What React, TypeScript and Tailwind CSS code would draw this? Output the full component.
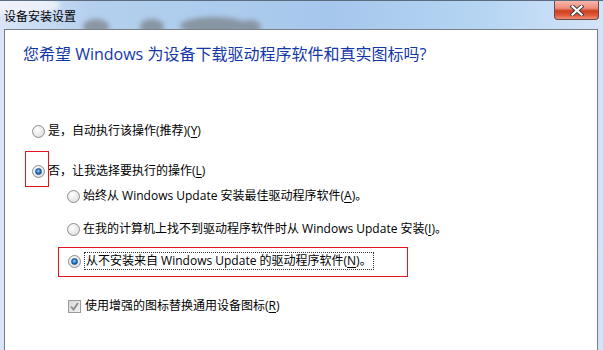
import React from 'react';

const bodyFont = { fontFamily: '"Open Sans", "Noto Sans CJK SC", sans-serif' };

const Radio: React.FC<{ checked?: boolean }> = ({ checked }) => (
  <span className="relative flex h-[13px] w-[13px] shrink-0 items-center justify-center rounded-full border border-[#8c8f94] bg-[radial-gradient(circle_at_40%_35%,#ffffff,#d6d6d6)]">
    {checked && (
      <span className="h-[7px] w-[7px] rounded-full border border-[#1d4f8a] bg-[radial-gradient(circle_at_45%_40%,#9fd3ff_0%,#2a7fd0_45%,#0d3d7a_100%)]" />
    )}
  </span>
);

const Checkbox: React.FC = () => (
  <span className="flex h-[13px] w-[13px] shrink-0 items-center justify-center border border-[#9a9a9a] bg-[linear-gradient(135deg,#d8d8d8,#f2f2f2)]">
    <svg width="9" height="9" viewBox="0 0 9 9">
      <path d="M1 4.5 L3.5 7.5 L8 1" fill="none" stroke="#8a8a8a" strokeWidth="1.8" />
    </svg>
  </span>
);

const Key: React.FC<{ k: string }> = ({ k }) => (
  <>
    (<span className="underline underline-offset-2">{k}</span>)
  </>
);

const CloseButton: React.FC = () => (
  <div className="flex h-[19px] w-[45px] items-center justify-center rounded-b-[4px] border border-t-0 border-[#6e4a46] bg-[linear-gradient(180deg,#f7b7aa_0%,#ee8d7d_40%,#c9401f_55%,#e35a3c_80%,#ee8f7a_100%)]">
    <svg width="14" height="11" viewBox="0 0 14 11">
      <path d="M2.5 1.5 L11.5 9.5 M11.5 1.5 L2.5 9.5" stroke="#3b3b3b" strokeWidth="4" strokeLinecap="square" />
      <path d="M2.5 1.5 L11.5 9.5 M11.5 1.5 L2.5 9.5" stroke="#ffffff" strokeWidth="2.2" strokeLinecap="square" />
    </svg>
  </div>
);

export default function App() {
  return (
    <div
      className="relative flex h-[350px] w-[603px] flex-col overflow-hidden border-t border-[#5c6c80] bg-[linear-gradient(90deg,#d9e5f6_0%,#b4d0ee_15%,#a6c7ec_55%,#b5d5f3_80%,#d4e3f8_100%)]"
      style={bodyFont}
    >
      <div className="relative flex h-[28px] shrink-0 items-start justify-between pl-[4px] pr-[4px]">
        {/* soft grey shapes seen through the glass title bar */}
        <svg className="pointer-events-none absolute left-0 top-0" width="320" height="28" viewBox="0 0 320 28">
          <defs>
            <filter id="soft" x="-50%" y="-50%" width="200%" height="200%">
              <feGaussianBlur stdDeviation="2.5" />
            </filter>
          </defs>
          <g fill="#7c838a" opacity="0.75" filter="url(#soft)">
            <ellipse cx="96" cy="26" rx="13" ry="8" />
            <ellipse cx="152" cy="26" rx="12" ry="8" />
            <ellipse cx="214" cy="25" rx="34" ry="9" />
            <ellipse cx="250" cy="26" rx="11" ry="7" />
          </g>
          <ellipse cx="20" cy="4" rx="40" ry="10" fill="#f4f6fb" opacity="0.8" filter="url(#soft)" />
        </svg>
        <span className="relative mt-[7px] text-[12px] leading-[16px] text-black" style={{ fontFamily: '"Noto Sans CJK SC", sans-serif' }}>
          设备安装设置
        </span>
        <CloseButton />
      </div>

      <div className="relative ml-[4px] mr-[5px] flex-1 border border-b-0 border-[#7b7f85] bg-white">
        <div className="ml-[18px] mt-[13px] text-[16px] leading-[22px] text-[#1437a8]">
          您希望 Windows 为设备下载驱动程序软件和真实图标吗?
        </div>

        <div className="text-[12px] leading-[20px] text-black">
          <div className="ml-[27px] mt-[56px] flex h-[20px] items-center gap-[3px]">
            <Radio />
            <span>是，自动执行该操作(推荐)<Key k="Y" /></span>
          </div>

          <div className="relative ml-[27px] mt-[20px] flex h-[20px] items-center gap-[3px]">
            <Radio checked />
            <span>否，让我选择要执行的操作<Key k="L" /></span>
            <div className="pointer-events-none absolute left-[-7px] top-[-10px] h-[36px] w-[24px] border border-[#e0141e]" />
          </div>

          <div className="ml-[62px] mt-[5px] flex h-[20px] items-center gap-[3px]">
            <Radio />
            <span>始终从 Windows Update 安装最佳驱动程序软件<Key k="A" />。</span>
          </div>

          <div className="ml-[62px] mt-[13px] flex h-[20px] items-center gap-[3px]">
            <Radio />
            <span>在我的计算机上找不到驱动程序软件时从 Windows Update 安装<Key k="I" />。</span>
          </div>

          <div className="relative ml-[63px] mt-[12px] flex h-[20px] items-center gap-[3px]">
            <Radio checked />
            <span className="border border-dotted border-[#333] px-[1px] leading-[16px]">
              从不安装来自 Windows Update 的驱动程序软件<Key k="N" />。
            </span>
            <div className="pointer-events-none absolute left-[-10px] top-[-4px] h-[30px] w-[350px] border border-[#e0141e]" />
          </div>

          <div className="ml-[63px] mt-[25px] flex h-[20px] items-center gap-[4px]">
            <Checkbox />
            <span>使用增强的图标替换通用设备图标<Key k="R" /></span>
          </div>
        </div>
      </div>
    </div>
  );
}
